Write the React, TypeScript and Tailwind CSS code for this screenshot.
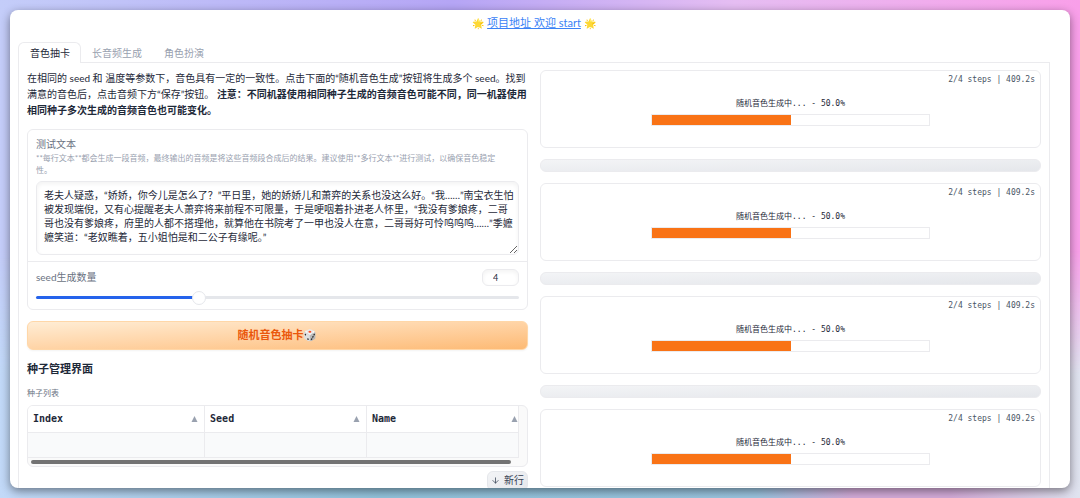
import React, { useState } from 'react';
import { ArrowDown } from 'lucide-react';

const TABS = ['音色抽卡', '长音频生成', '角色扮演'];
const COLUMNS = ['Index', 'Seed', 'Name'];
const SLOTS = [1, 2, 3, 4];
const SAMPLE_TEXT =
  '老夫人疑惑，“娇娇，你今儿是怎么了？”平日里，她的娇娇儿和萧弈的关系也没这么好。“我……”南宝衣生怕被发现端倪，又有心提醒老夫人萧弈将来前程不可限量，于是哽咽着扑进老人怀里，“我没有爹娘疼，二哥哥也没有爹娘疼，府里的人都不搭理他，就算他在书院考了一甲也没人在意，二哥哥好可怜呜呜呜……”季嬷嬷笑道：“老奴瞧着，五小姐怕是和二公子有缘呢。”';

interface ProgressCardProps {
  step: number;
  total: number;
  seconds: number;
}

const ProgressCard: React.FC<ProgressCardProps> = ({ step, total, seconds }) => {
  const percent = (step / total) * 100;

  return (
    <div className="flex h-[78px] shrink-0 flex-col rounded-md border border-[#ebebee] px-[5px] font-['DejaVu_Sans_Mono','Noto_Sans_CJK_SC',monospace] text-[8px] text-gray-800">
      <div className="pt-[3px] text-right leading-3 text-gray-600">
        {step}/{total} steps | {seconds}s
      </div>
      <div className="mt-3 text-center leading-3">随机音色生成中... - {percent.toFixed(1)}%</div>
      <div className="mx-auto mt-1 h-3 w-[57%] border border-[#ebebee]">
        <div className="h-full bg-[#f97316]" style={{ width: `${percent}%` }} />
      </div>
    </div>
  );
};

const SeedForm: React.FC = () => {
  const [text, setText] = useState<string>(SAMPLE_TEXT);
  const [count, setCount] = useState<number>(4);
  const ratio = ((count - 1) / 9) * 100;

  return (
    <div className="mt-[11px] rounded-md border border-[#ebebee]">
      <div className="border-b border-[#ebebee] px-2 pt-1.5 pb-1.5">
        <label htmlFor="sample-text" className="block text-[10px] leading-4 text-gray-500">
          测试文本
        </label>
        <p className="text-[8px] leading-3 text-gray-400">
          **每行文本**都会生成一段音频，最终输出的音频是将这些音频段合成后的结果。建议使用**多行文本**进行测试，以确保音色稳定
          <br />
          性。
        </p>
        <textarea
          id="sample-text"
          rows={4}
          value={text}
          onChange={(e) => setText(e.target.value)}
          className="mt-[5px] block h-[74px] w-full resize-y overflow-hidden rounded-md border border-[#ebebee] py-1.5 pr-1 pl-[7px] text-[10px] leading-[14px] text-gray-800 shadow-[inset_0_2px_4px_0_rgba(0,0,0,0.05)] outline-none"
        />
      </div>
      <div className="px-2 pt-[7px]">
        <div className="flex items-start justify-between">
          <label htmlFor="seed-count" className="text-[10px] leading-4 text-gray-500">
            seed生成数量
          </label>
          <input
            type="number"
            aria-label="seed生成数量"
            min={1}
            max={10}
            value={count}
            onChange={(e) => setCount(Number(e.target.value))}
            className="h-[17px] w-[37px] rounded-md border border-[#ebebee] pl-2.5 text-[9px] text-gray-800 shadow-[inset_0_2px_4px_0_rgba(0,0,0,0.05)] outline-none [appearance:textfield]"
          />
        </div>
        <input
          id="seed-count"
          type="range"
          min={1}
          max={10}
          value={count}
          onChange={(e) => setCount(Number(e.target.value))}
          style={{ backgroundImage: `linear-gradient(to right, #2563eb ${ratio}%, #e5e7eb ${ratio}%)` }}
          className="mt-2.5 mb-2.5 block h-[3px] w-full appearance-none rounded-sm [&::-webkit-slider-thumb]:size-3.5 [&::-webkit-slider-thumb]:appearance-none [&::-webkit-slider-thumb]:rounded-full [&::-webkit-slider-thumb]:border [&::-webkit-slider-thumb]:border-gray-200 [&::-webkit-slider-thumb]:bg-white"
        />
      </div>
    </div>
  );
};

const SeedTable: React.FC = () => (
  <div>
    <div className="mt-1.5 overflow-hidden rounded-md border border-[#ebebee] bg-neutral-50 pr-2">
      <table className="w-full table-fixed border-collapse font-['DejaVu_Sans_Mono',monospace] text-[10px]">
        <colgroup>
          <col className="w-[36%]" />
          <col className="w-[33%]" />
          <col className="w-[31%]" />
        </colgroup>
        <thead>
          <tr className="h-[26px] bg-white text-gray-800">
            {COLUMNS.map((name) => (
              <th key={name} className="border-r border-b border-[#ebebee] pr-1.5 pl-[5px] text-left font-bold last:pr-0">
                <div className="flex items-center justify-between">
                  {name}
                  <svg width="7" height="6" viewBox="0 0 7 6" className="shrink-0 fill-gray-400" aria-hidden="true">
                    <path d="M3.5 0 6.5 6h-6z" />
                  </svg>
                </div>
              </th>
            ))}
          </tr>
        </thead>
        <tbody>
          <tr className="h-[25px] bg-gray-50">
            {COLUMNS.map((name) => (
              <td key={name} className="border-r border-b border-[#ebebee]" />
            ))}
          </tr>
        </tbody>
      </table>
      <div className="my-0.5 mr-2 ml-[3px] h-1 rounded-full bg-neutral-500" />
    </div>
    <div className="mt-1 flex justify-end">
      <button className="flex h-5 items-center gap-1 rounded-md border border-gray-200 bg-linear-to-br from-gray-100 to-gray-200 px-[3px] text-[10px] text-gray-700">
        <ArrowDown size={9} strokeWidth={2} />
        新行
      </button>
    </div>
  </div>
);

const App: React.FC = () => {
  const [activeTab, setActiveTab] = useState<string>(TABS[0]);

  return (
    <div
      lang="zh-CN"
      className="grid h-screen bg-[linear-gradient(to_right,#c4cdf9,#b5a5f5_42%,#e5bdf2_68%,#f99fe9)] font-['Lato','Noto_Sans_CJK_SC',sans-serif]"
    >
      <div className="col-start-1 row-start-1 bg-[linear-gradient(to_right,#c2d9f8,#92c3dc_35%,#9ac4df_70%,#d3abd9_79%,#d3abd9_88%,#dfe3ef)] [mask-image:linear-gradient(to_bottom,transparent_50%,black_75%)]" />
      <div className="z-10 col-start-1 row-start-1 h-screen min-w-0 p-2.5">
        <main className="flex h-full flex-col overflow-hidden rounded-lg bg-white pr-5 pl-2 shadow-[0_3px_10px_rgba(0,0,0,0.45)]">
          <p className="h-[22px] shrink-0 pt-1 text-center text-[11px] leading-[18px]">
            <span className="text-[10px]">🌟</span>{' '}
            <a href="#start" className="text-[#3b82f6] underline">
              项目地址 欢迎 start
            </a>{' '}
            <span className="text-[10px]">🌟</span>
          </p>

          <nav className="mt-2.5 flex shrink-0 border-b border-[#ebebee]">
            {TABS.map((tab) => (
              <button
                key={tab}
                onClick={() => setActiveTab(tab)}
                className={`-mb-px h-[21px] rounded-t-md border border-b-0 px-2.5 text-[10px] first:pl-[11px] ${
                  activeTab === tab ? 'border-[#ebebee] bg-white text-gray-800' : 'border-transparent text-gray-400'
                }`}
              >
                {tab}
              </button>
            ))}
          </nav>

          <div className="grid shrink-0 grid-cols-2 gap-3 border-x border-[#ebebee] px-2 pt-[7px]">
            <section className="min-w-0">
              <p className="text-[10px] leading-4 text-gray-800">
                在相同的 seed 和 温度等参数下，音色具有一定的一致性。点击下面的“随机音色生成”按钮将生成多个 seed。找到满意的音色后，点击音频下方“保存”按钮。{' '}
                <strong>注意：不同机器使用相同种子生成的音频音色可能不同，同一机器使用相同种子多次生成的音频音色也可能变化。</strong>
              </p>
              <SeedForm />
              <button className="mt-[11px] flex h-[29px] w-full items-center justify-center rounded-md border border-orange-200 bg-linear-to-br from-[#ffedd5] to-[#fdba74] text-[11px] font-bold text-[#ea580c] shadow-xs">
                随机音色抽卡🎲
              </button>
              <h3 className="mt-2.5 text-[11px] leading-[18px] font-bold text-gray-800">种子管理界面</h3>
              <p className="mt-[9px] text-[8px] leading-3 text-gray-500">种子列表</p>
              <SeedTable />
            </section>

            <section className="flex min-w-0 flex-col gap-[11px]">
              {SLOTS.map((slot) => (
                <React.Fragment key={slot}>
                  <ProgressCard step={2} total={4} seconds={409.2} />
                  <button
                    aria-label={`保存种子 ${slot}`}
                    className="h-[13px] shrink-0 rounded-md border border-[#ebebee] bg-linear-to-br from-gray-100 to-gray-200"
                  />
                </React.Fragment>
              ))}
            </section>
          </div>
        </main>
      </div>
    </div>
  );
};

export default App;
